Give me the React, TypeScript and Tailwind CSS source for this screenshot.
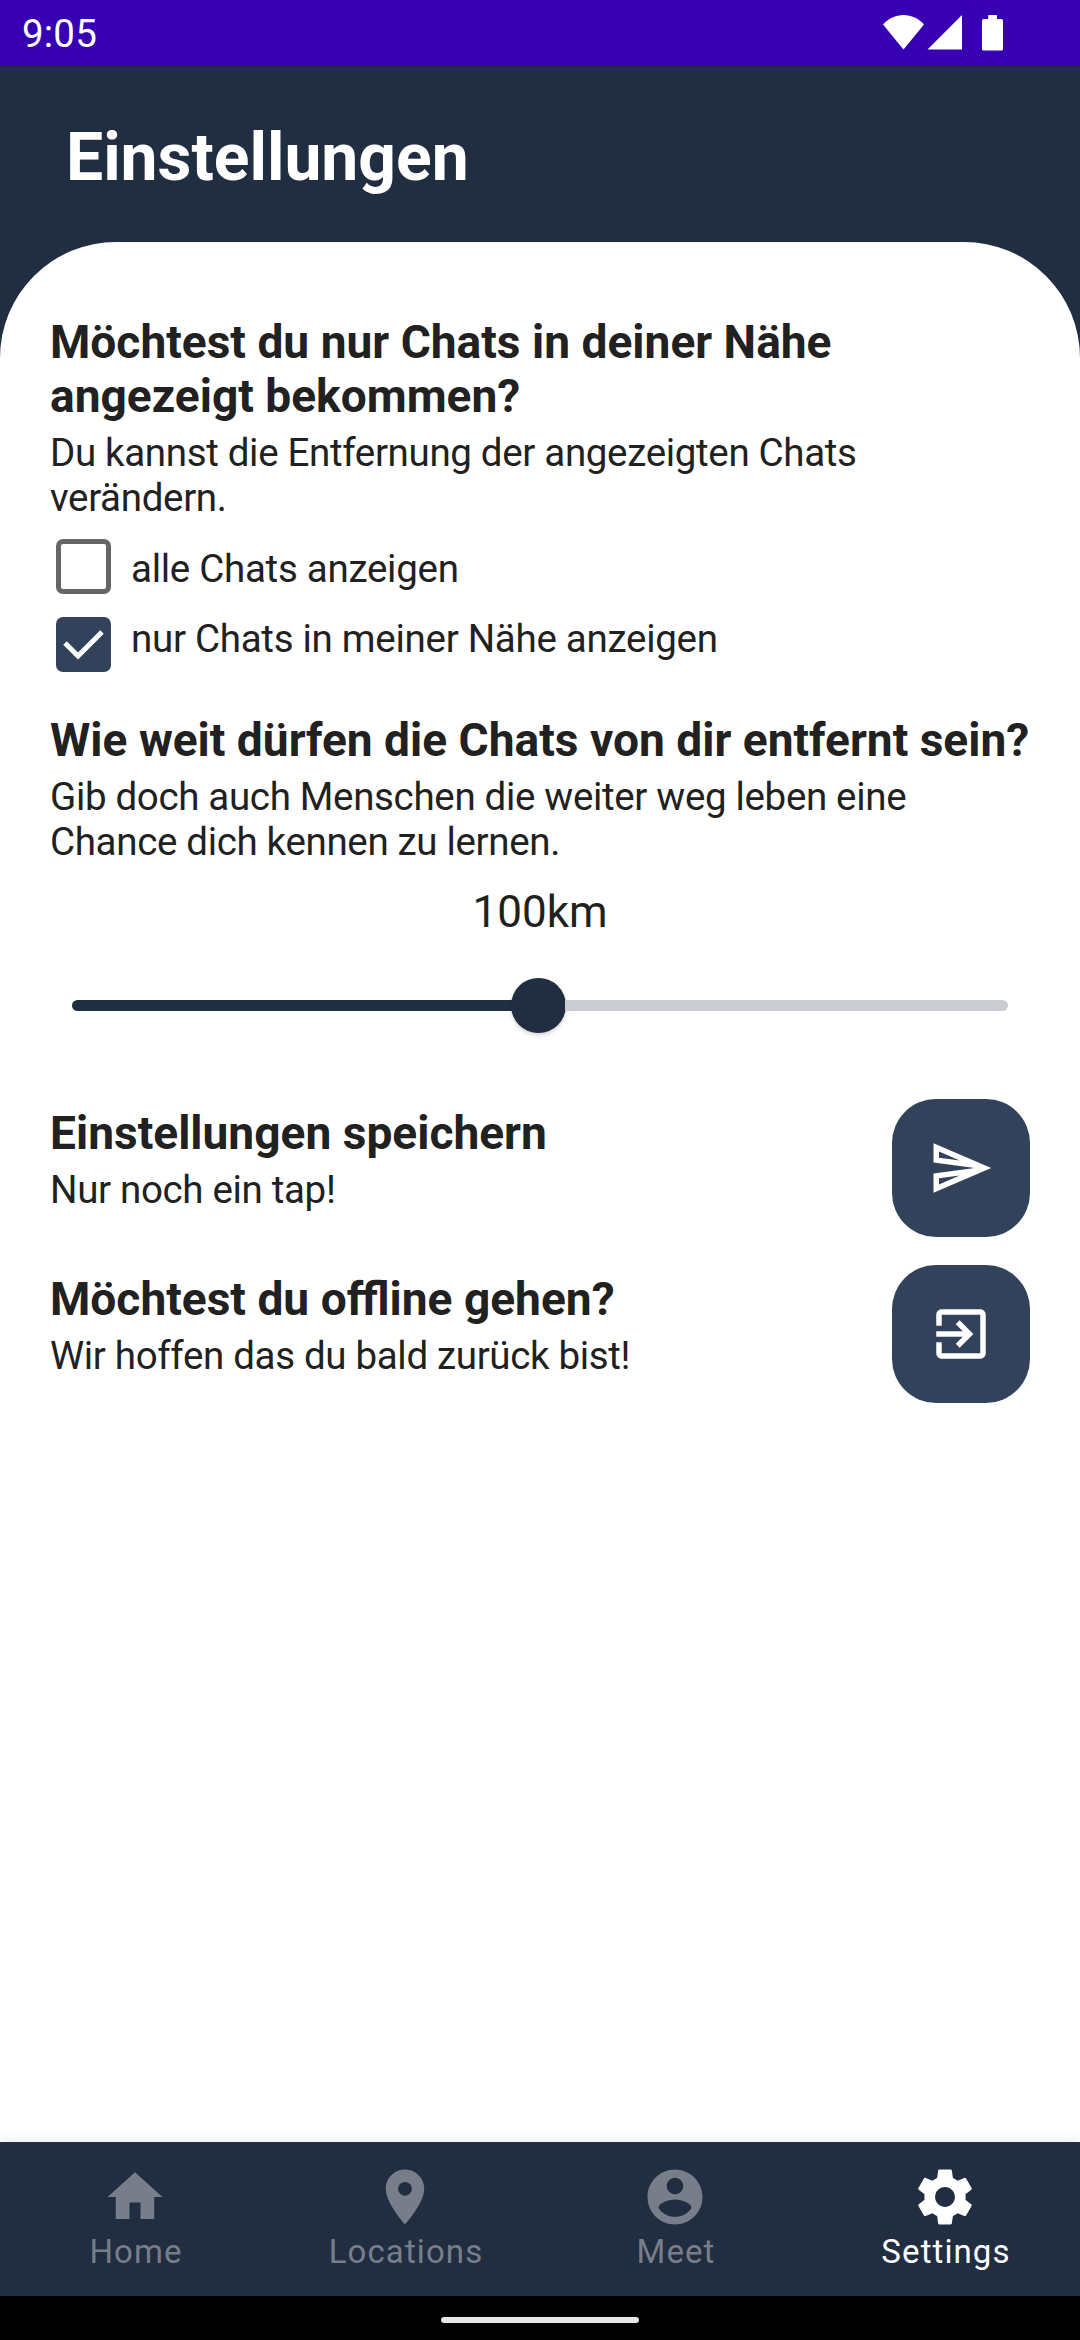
import React from "react";

const PATHS = {
  home: "M10 20v-6h4v6h5v-8h3L12 3 2 12h3v8z",
  place:
    "M12 2C8.13 2 5 5.13 5 9c0 5.25 7 13 7 13s7-7.75 7-13c0-3.87-3.13-7-7-7zm0 9.5c-1.38 0-2.5-1.12-2.5-2.5s1.12-2.5 2.5-2.5 2.5 1.12 2.5 2.5-1.12 2.5-2.5 2.5z",
  account:
    "M12 2C6.48 2 2 6.48 2 12s4.48 10 10 10 10-4.48 10-10S17.52 2 12 2zm0 3c1.66 0 3 1.34 3 3s-1.34 3-3 3-3-1.34-3-3 1.34-3 3-3zm0 14.2c-2.5 0-4.71-1.28-6-3.22.03-1.99 4-3.08 6-3.08 1.99 0 5.97 1.09 6 3.08-1.29 1.94-3.5 3.22-6 3.22z",
  settings:
    "M19.43 12.98c.04-.32.07-.64.07-.98s-.03-.66-.07-.98l2.11-1.65c.19-.15.24-.42.12-.64l-2-3.46c-.12-.22-.39-.3-.61-.22l-2.49 1c-.52-.4-1.08-.73-1.69-.98l-.38-2.65C14.46 2.18 14.25 2 14 2h-4c-.25 0-.46.18-.49.42l-.38 2.65c-.61.25-1.17.59-1.69.98l-2.49-1c-.23-.09-.49 0-.61.22l-2 3.46c-.13.22-.07.49.12.64l2.11 1.65c-.04.32-.07.65-.07.98s.03.66.07.98l-2.11 1.65c-.19.15-.24.42-.12.64l2 3.46c.12.22.39.3.61.22l2.49-1c.52.4 1.08.73 1.69.98l.38 2.65c.03.24.24.42.49.42h4c.25 0 .46-.18.49-.42l.38-2.65c.61-.25 1.17-.59 1.69-.98l2.49 1c.23.09.49 0 .61-.22l2-3.46c.12-.22.07-.49-.12-.64l-2.11-1.65zM12 15.600c-1.990 0-3.600-1.610-3.600-3.600s1.610-3.600 3.600-3.600 3.600 1.610 3.600 3.600-1.610 3.600-3.600 3.600z",
  send: "M4.01 6.03l7.51 3.22-7.52-1 .01-2.22m7.5 8.72L4 17.97v-2.22l7.51-1M2.01 3L2 10l15 2-15 2 .01 7L23 12 2.01 3z",
  exit: "M10.09 15.59L11.5 17l5-5-5-5-1.41 1.41L12.67 11H3v2h9.67l-2.58 2.59zM19 3H5c-1.11 0-2 .9-2 2v4h2V5h14v14H5v-4H3v4c0 1.1.89 2 2 2h14c1.1 0 2-.9 2-2V5c0-1.1-.9-2-2-2z",
};

function Icon({ name }: { name: keyof typeof PATHS }) {
  return (
    <svg viewBox="0 0 24 24" className="size-[66px] fill-current">
      <path d={PATHS[name]} />
    </svg>
  );
}

function StatusBar() {
  return (
    <div className="flex h-[66px] items-center justify-between bg-[#3700b3] pl-[22px] pr-[77px] text-white">
      <span className="text-[38.5px] leading-[45px] tracking-[0.2px]">9:05</span>
      <svg viewBox="0 0 120 36" className="h-9 w-[120px] fill-current">
        <path d="M0 9.5C5.5 3.5 12.5 0 20.5 0S35.5 3.5 41 9.5L20.5 34.5z" />
        <path d="M79 0V34.5H44.5z" />
        <path d="M105.2 0h8.800v4h4.500a1.500 1.500 0 0 1 1.500 1.500v28.500a1.500 1.500 0 0 1-1.500 1.500h-18a1.500 1.500 0 0 1-1.500-1.500V5.500a1.500 1.500 0 0 1 1.500-1.500h4.700z" />
      </svg>
    </div>
  );
}

function Heading({ children }: { children: React.ReactNode }) {
  return <h2 className="text-[46.1px] leading-[54px] font-bold whitespace-nowrap">{children}</h2>;
}

function Body({ children }: { children: React.ReactNode }) {
  return <p className="mt-[7px] text-[38.5px] leading-[45px] tracking-[-0.33px]">{children}</p>;
}

function ActionRow({ title, text, icon }: { title: string; text: string; icon: "send" | "exit" }) {
  return (
    <div className="flex h-[138px] justify-between">
      <div className="pt-[7px]">
        <Heading>{title}</Heading>
        <Body>{text}</Body>
      </div>
      <button className="flex size-[138px] items-center justify-center rounded-[44px] bg-[#33425b] text-white">
        <Icon name={icon} />
      </button>
    </div>
  );
}

const TABS = [
  { label: "Home", icon: "home", active: false },
  { label: "Locations", icon: "place", active: false },
  { label: "Meet", icon: "account", active: false },
  { label: "Settings", icon: "settings", active: true },
] as const;

export default function App() {
  return (
    <div className="flex h-[2340px] w-[1080px] flex-col overflow-hidden bg-[#212d40] font-['Roboto',sans-serif] text-[#212121]">
      <StatusBar />
      <header className="flex h-[176px] items-start pt-[53px] pl-[66px]">
        <h1 className="text-[66px] leading-[77px] font-bold text-white">Einstellungen</h1>
      </header>

      <main className="flex-1 rounded-t-[116px] bg-white pt-[73px] pr-[50px] pl-[50px]">
        <Heading>
          Möchtest du nur Chats in deiner Nähe
          <br />
          angezeigt bekommen?
        </Heading>
        <Body>
          Du kannst die Entfernung der angezeigten Chats
          <br />
          verändern.
        </Body>

        <label className="mt-[19px] flex h-[55px] items-start pl-[6px]">
          <span className="size-[55px] rounded-[7px] border-5 border-[#666666]" />
          <span className="mt-[7px] ml-5 text-[38.5px] leading-[45px] tracking-[-0.28px]">alle Chats anzeigen</span>
        </label>
        <label className="mt-[23px] flex h-[55px] items-start pl-[6px]">
          <span className="size-[55px] rounded-[7px] bg-[#33425b]">
            <svg viewBox="0 0 55 55" className="size-[55px] fill-none stroke-white stroke-[5]">
              <path d="M9 26 22 39 46 15" />
            </svg>
          </span>
          <span className="-mt-px ml-5 text-[38.5px] leading-[45px] tracking-[-0.28px]">
            nur Chats in meiner Nähe anzeigen
          </span>
        </label>

        <div className="mt-[41px]">
          <Heading>Wie weit dürfen die Chats von dir entfernt sein?</Heading>
          <Body>
            Gib doch auch Menschen die weiter weg leben eine
            <br />
            Chance dich kennen zu lernen.
          </Body>
        </div>

        <div className="mt-[22px] text-center text-[44px] leading-[52px]">100km</div>

        <div className="mt-10 flex h-[55px] items-center px-[22px]">
          <div className="-mt-px h-[11px] w-[440px] rounded-l-full bg-[#212d40]" />
          <div className="-mx-px size-[55px] shrink-0 rounded-full bg-[#212d40] shadow-[0_2px_4px_rgba(0,0,0,0.18)]" />
          <div className="-mt-px h-[11px] flex-1 rounded-r-full bg-[#caccd1]" />
        </div>

        <div className="mt-[66px] flex flex-col gap-7">
          <ActionRow title="Einstellungen speichern" text="Nur noch ein tap!" icon="send" />
          <ActionRow title="Möchtest du offline gehen?" text="Wir hoffen das du bald zurück bist!" icon="exit" />
        </div>
      </main>

      <nav className="grid h-[154px] grid-cols-4 bg-[#212d40] shadow-[0_0_14px_rgba(0,0,0,0.09)]">
        {TABS.map((tab) => (
          <div
            key={tab.label}
            className={`flex flex-col items-center pt-[22px] ${tab.active ? "text-white" : "text-[#777e8a]"}`}
          >
            <Icon name={tab.icon} />
            <span className="mt-[2px] pl-[2px] text-[33px] leading-[39px] tracking-[0.0333em]">{tab.label}</span>
          </div>
        ))}
      </nav>
      <div className="flex h-[44px] items-start justify-center bg-black pt-[21px]">
        <div className="h-[6px] w-[198px] rounded-full bg-[#e8e6ea]" />
      </div>
    </div>
  );
}
